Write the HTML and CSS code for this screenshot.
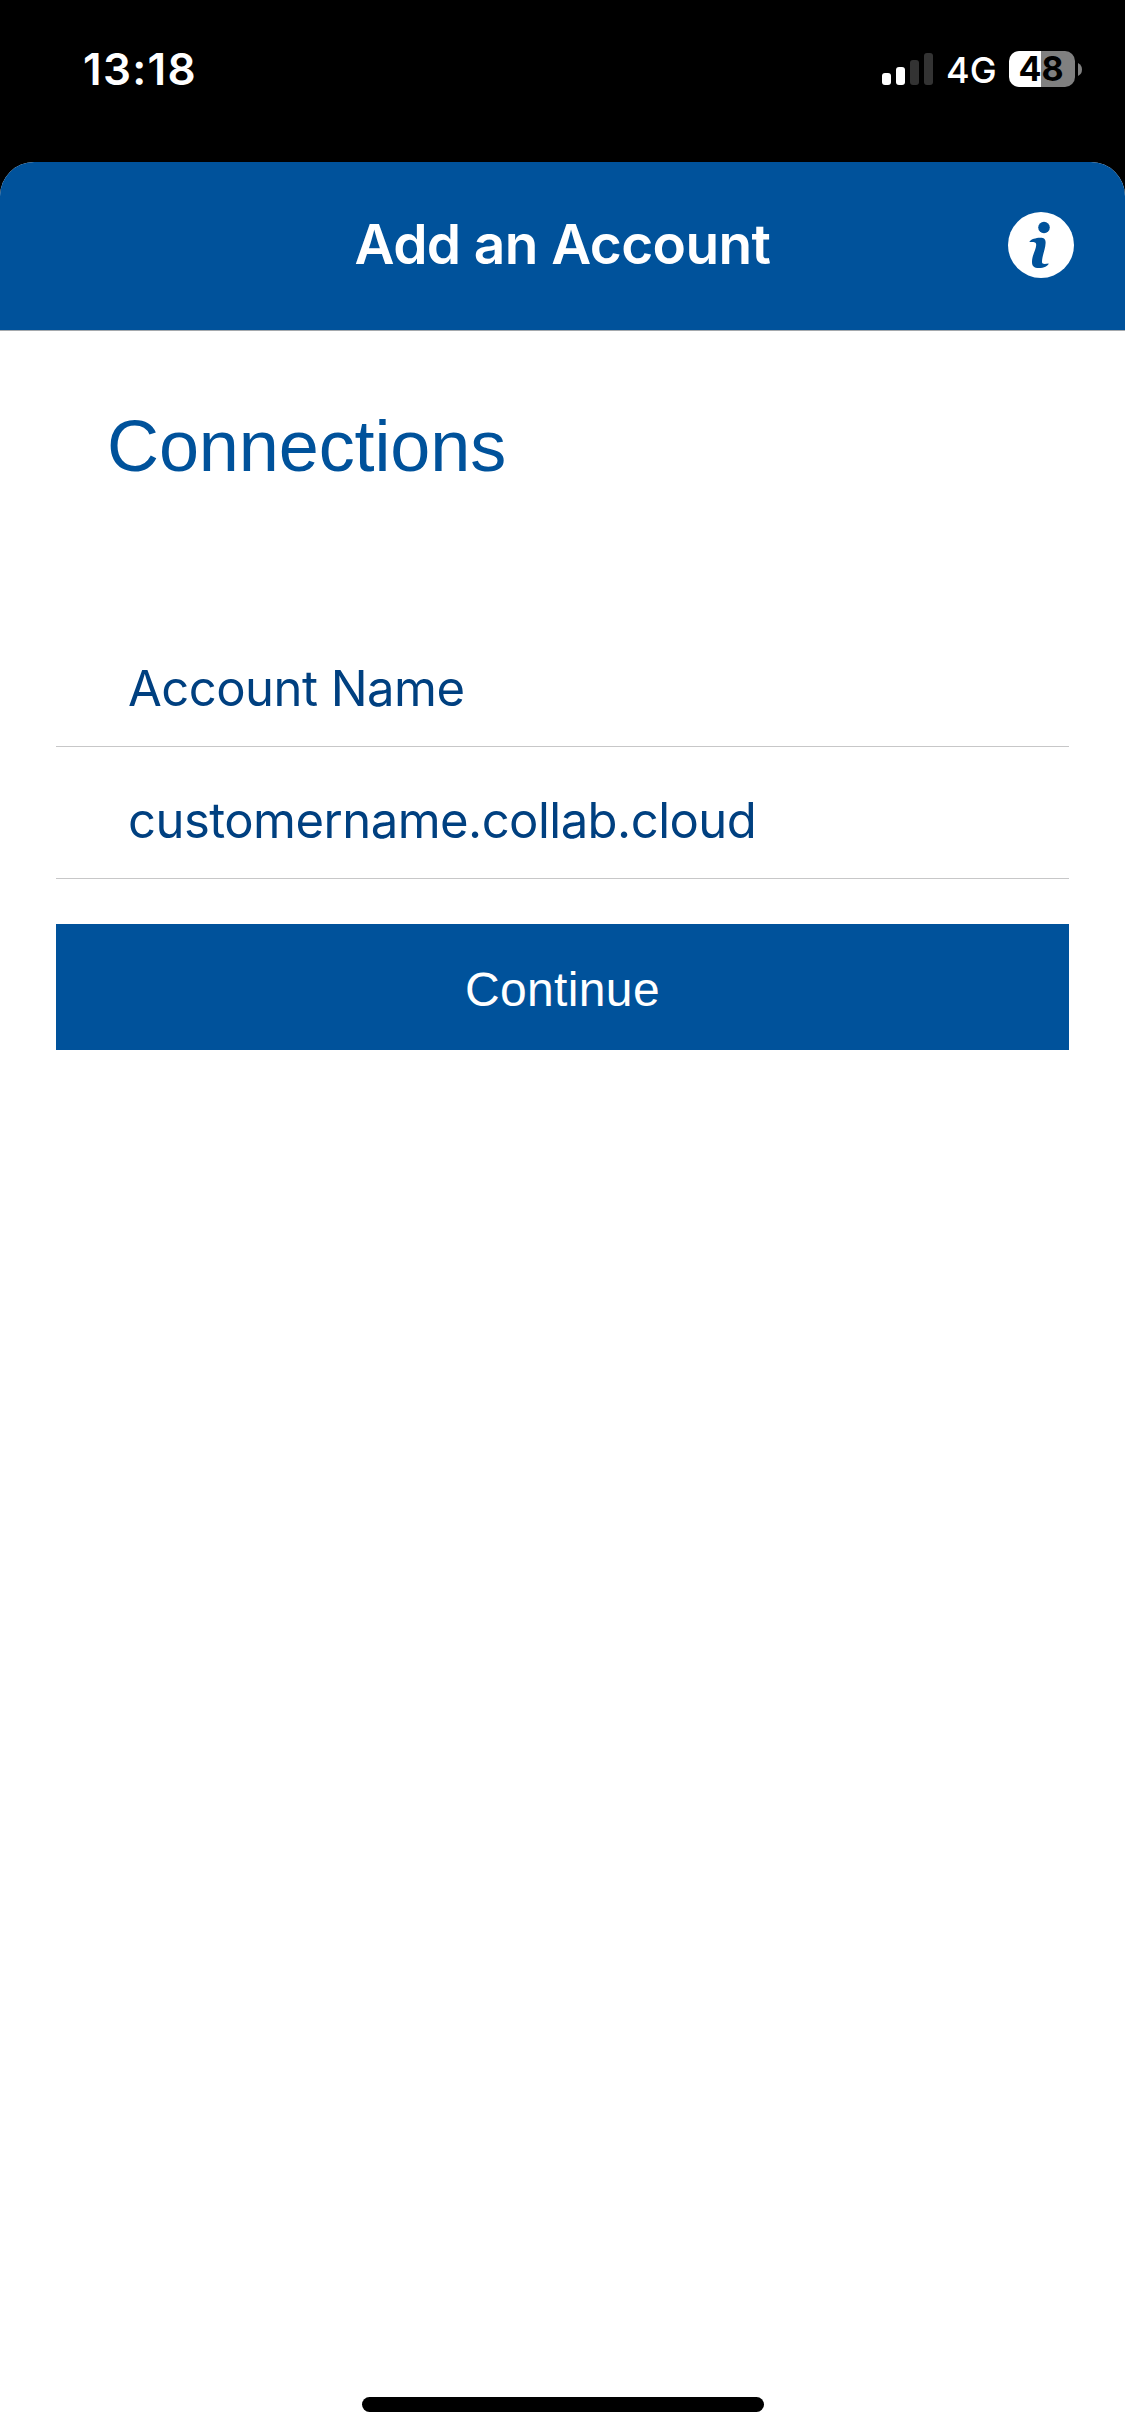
FILE: index.html
```html
<!DOCTYPE html>
<html lang="en">
<head>
<meta charset="utf-8">
<title>Add an Account</title>
<link rel="stylesheet" href="styles.css">
</head>
<body>
<div class="screen">
  <div class="status">
    <span class="time">13:18</span>
    <svg class="signal" viewBox="0 0 51 32" aria-hidden="true">
      <rect x="0" y="20" width="9" height="12" rx="3" fill="#fff"/>
      <rect x="14" y="14" width="9" height="18" rx="3" fill="#fff"/>
      <rect x="28" y="7" width="9" height="25" rx="3" fill="#333"/>
      <rect x="42" y="0" width="9" height="32" rx="3" fill="#333"/>
    </svg>
    <span class="network">4G</span>
    <div class="battery"><span class="level">48</span></div>
    <svg class="nub" viewBox="0 0 4 13" aria-hidden="true"><path d="M0 0Q4 2 4 6.5T0 13Z" fill="#808080"/></svg>
  </div>
  <main class="sheet">
    <header class="header">
      <h1 class="title">Add an Account</h1>
      <svg class="info" viewBox="0 0 66 66" role="img" aria-label="Information">
        <circle cx="33" cy="33" r="33" fill="#fff"/>
        <circle cx="36" cy="15.5" r="5.8" fill="#00529b"/>
        <path d="M21.3 30C23 27 28 26 32 25.8C35.5 25.6 37.8 27 37.6 31C37.4 37 34 44 34 50C34 52.5 37 52 40.7 51.5C40 54 36 56 31 56C26 56 24 54 24 50C24 43 28 38 28.2 33C28.3 29.5 25 30 21.3 30Z" fill="#00529b"/>
      </svg>
    </header>
    <h2 class="heading">Connections</h2>
    <form class="form">
      <div class="field">Account Name</div>
      <div class="field">customername.collab.cloud</div>
      <button class="continue" type="button">Continue</button>
    </form>
    <div class="home"></div>
  </main>
</div>
</body>
</html>
```
FILE: styles.css
```css
* { box-sizing: border-box; }
body {
  margin: 0;
  background: #000;
  font-family: Inter, "Liberation Sans", sans-serif;
}
.screen {
  display: flex;
  flex-direction: column;
  width: 1125px;
  height: 2436px;
  background: #000;
}
.status {
  display: flex;
  align-items: center;
  height: 162px;
  padding: 0 43px 24px 83px;
  color: #fff;
}
.time {
  margin-right: auto;
  font-size: 44px;
  font-weight: 600;
  letter-spacing: 1.3px;
}
.signal { width: 51px; height: 32px; }
.network {
  width: 62px;
  margin-left: 13px;
  padding-top: 2px;
  font-size: 36px;
  font-weight: 450;
  line-height: 44px;
}
.battery {
  width: 66px;
  height: 36px;
  margin-left: 1px;
  padding-right: 2px;
  border-radius: 10px;
  background: linear-gradient(90deg, #fff 32px, #808080 32px);
  color: #000;
  font-size: 34px;
  font-weight: 700;
  line-height: 35px;
  text-align: center;
}
.nub { width: 4px; height: 13px; margin-left: 3px; }
.sheet {
  display: flex;
  flex-direction: column;
  flex: 1;
  overflow: hidden;
  border-radius: 34px 34px 0 0;
  background: #fff;
}
.header {
  display: grid;
  grid-template-columns: 66px 1fr 66px;
  align-items: center;
  height: 169px;
  padding: 0 51px 2px;
  border-bottom: 1px solid #a5a9ad;
  background: #00529b;
  color: #fff;
}
.title {
  grid-column: 2;
  margin: 0;
  padding-bottom: 3px;
  font-size: 55px;
  font-weight: 600;
  line-height: 66px;
  letter-spacing: -0.6px;
  text-align: center;
}
.info { width: 66px; height: 66px; }
.heading {
  margin: 75px 0 0 107px;
  color: #00529b;
  font: 400 72px/80px "Liberation Sans", sans-serif;
  letter-spacing: -0.1px;
}
.form {
  display: flex;
  flex-direction: column;
  margin: 129px 56px 0;
}
.field {
  height: 132px;
  padding: 44px 0 0 72px;
  border-bottom: 1px solid #c7c7c8;
  color: #004080;
  font-size: 49px;
  line-height: 60px;
  letter-spacing: -0.53px;
}
.continue {
  height: 126px;
  margin-top: 45px;
  padding: 5px 0 0;
  border: 0;
  background: #00529b;
  color: #fff;
  font: 400 48px/60px "Liberation Sans", sans-serif;
  letter-spacing: 0.35px;
}
.home {
  width: 402px;
  height: 15px;
  margin: auto auto 24px 362px;
  border-radius: 8px;
  background: #000;
}
```
